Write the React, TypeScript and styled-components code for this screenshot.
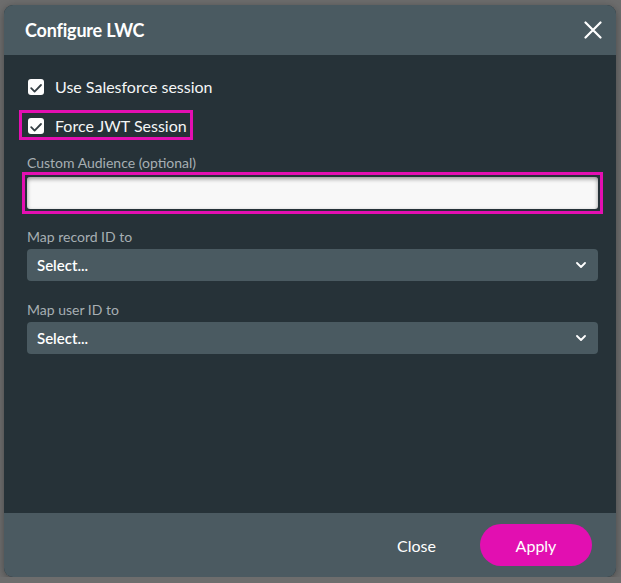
import styled, { createGlobalStyle } from 'styled-components';

const GlobalStyle = createGlobalStyle`
    html, body {
        margin: 0;
        padding: 0;
        background: #6d6d6d;
        font-family: Lato, "Noto Sans", sans-serif;
    }
`;

function CheckBox() {
    return (
        <Box>
            <svg width="16" height="16" viewBox="0 0 16 16">
                <path d="M3.2 9.2 L6.6 12.6 L13 6" fill="none" stroke="#333d42" strokeWidth="1.8" strokeLinecap="round" strokeLinejoin="round" />
            </svg>
        </Box>
    );
}

function SelectBox() {
    return (
        <Select>
            <span>Select...</span>
            <svg width="10" height="6" viewBox="0 0 10 6">
                <path d="M1 1 L5 5 L9 1" fill="none" stroke="#fff" strokeWidth="1.8" strokeLinecap="round" strokeLinejoin="round" />
            </svg>
        </Select>
    );
}

function App() {
    return (
        <>
            <GlobalStyle />
            <Dialog>
                <Header>
                    <Title>Configure LWC</Title>
                    <CloseButton aria-label="close">
                        <svg width="18" height="18" viewBox="0 0 18 18">
                            <path d="M1.5 1.5 L16.5 16.5 M16.5 1.5 L1.5 16.5" stroke="#fff" strokeWidth="2.2" strokeLinecap="round" />
                        </svg>
                    </CloseButton>
                </Header>
                <Body>
                    <CheckRow>
                        <CheckBox />
                        Use Salesforce session
                    </CheckRow>
                    <Highlight>
                        <CheckRow>
                            <CheckBox />
                            Force JWT Session
                        </CheckRow>
                    </Highlight>
                    <Label $top={14} $bottom={1}>Custom Audience (optional)</Label>
                    <InputFrame>
                        <TextInput type="text" />
                    </InputFrame>
                    <Label $top={14} $bottom={4}>Map record ID to</Label>
                    <SelectBox />
                    <Label $top={20} $bottom={4}>Map user ID to</Label>
                    <SelectBox />
                </Body>
                <Footer>
                    <TextButton>Close</TextButton>
                    <PrimaryButton>Apply</PrimaryButton>
                </Footer>
            </Dialog>
        </>
    );
}

const Dialog = styled.div`
    width: 612px;
    height: 572px;
    margin: 5px 0 0 4px;
    border-radius: 9px;
    overflow: hidden;
    display: flex;
    flex-direction: column;
    background: #263238;
    box-shadow: 0 2px 8px rgba(0, 0, 0, 0.35);
`;

const Header = styled.div`
    height: 50px;
    flex-shrink: 0;
    background: #4a5a61;
    display: flex;
    align-items: center;
    justify-content: space-between;
    padding: 0 14px 0 21px;
`;

const Title = styled.h2`
    margin: 0;
    font-size: 18px;
    font-weight: 700;
    color: #fff;
    letter-spacing: -0.2px;
`;

const CloseButton = styled.button`
    background: none;
    border: none;
    padding: 0;
    width: 18px;
    height: 18px;
    display: flex;
    cursor: pointer;
`;

const Body = styled.div`
    flex: 1;
    display: flex;
    flex-direction: column;
    align-items: stretch;
    padding: 23px 18px 0 23px;
`;

const CheckRow = styled.label`
    display: flex;
    align-items: center;
    gap: 11px;
    height: 17px;
    padding-left: 1px;
    font-size: 16px;
    color: #f4f6f6;
`;

const Box = styled.span`
    width: 16px;
    height: 16px;
    border-radius: 3px;
    background: #fdfdfd;
    display: flex;
    flex-shrink: 0;
`;

const Highlight = styled.div`
    align-self: flex-start;
    margin: 15px 0 0 -8px;
    padding: 4px 3px 3px 5px;
    border: 3px solid #e40fb2;
`;

const Label = styled.div<{ $top: number; $bottom: number }>`
    margin-top: ${(p) => p.$top}px;
    margin-bottom: ${(p) => p.$bottom}px;
    font-size: 14px;
    line-height: 17px;
    color: #a7afb3;
`;

const InputFrame = styled.div`
    margin: 0 -5px;
    padding: 2px;
    border: 3px solid #e40fb2;
    display: flex;
`;

const TextInput = styled.input`
    box-sizing: border-box;
    height: 32px;
    width: 100%;
    border: none;
    border-radius: 3px;
    background: #f8f8f8;
    box-shadow: inset 0 2px 4px rgba(0, 0, 0, 0.4);
    outline: none;
`;

const Select = styled.div`
    height: 32px;
    border-radius: 4px;
    background: #4a5a61;
    display: flex;
    align-items: center;
    justify-content: space-between;
    padding: 0 12px 0 10px;
    font-size: 15px;
    font-weight: 600;
    color: #fff;
`;

const Footer = styled.div`
    height: 64px;
    flex-shrink: 0;
    background: #4b5a61;
    display: flex;
    align-items: center;
    justify-content: flex-end;
    gap: 22px;
    padding-right: 24px;
`;

const TextButton = styled.button`
    background: none;
    border: none;
    padding: 0 22px;
    height: 42px;
    font-family: inherit;
    font-size: 16px;
    color: #fff;
    cursor: pointer;
`;

const PrimaryButton = styled.button`
    width: 112px;
    height: 42px;
    border: none;
    border-radius: 21px;
    background: #e20fb1;
    font-family: inherit;
    font-size: 16px;
    color: #fff;
    cursor: pointer;
`;

export default App;
